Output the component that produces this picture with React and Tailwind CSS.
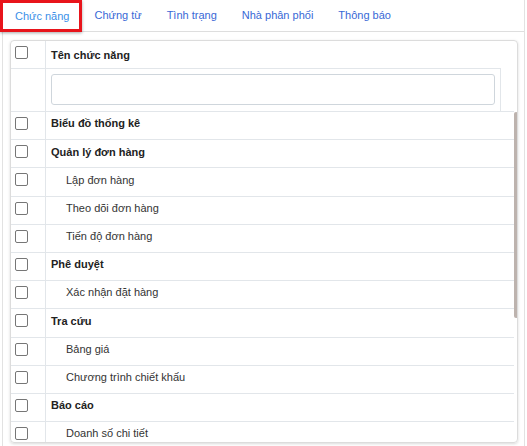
import React from 'react';

const tabs = ['Chứng từ', 'Tình trạng', 'Nhà phân phối', 'Thông báo'];

const rows = [
  { label: 'Biểu đồ thống kê', group: true },
  { label: 'Quản lý đơn hàng', group: true },
  { label: 'Lập đơn hàng' },
  { label: 'Theo dõi đơn hàng' },
  { label: 'Tiến độ đơn hàng' },
  { label: 'Phê duyệt', group: true },
  { label: 'Xác nhận đặt hàng' },
  { label: 'Tra cứu', group: true },
  { label: 'Bảng giá' },
  { label: 'Chương trình chiết khấu' },
  { label: 'Báo cáo', group: true },
  { label: 'Doanh số chi tiết' },
];

const Checkbox = () => (
  <div className="w-[13px] h-[13px] rounded-[2px] border border-[#767676] bg-white" />
);

const App = () => {
  return (
    <div
      className="w-[527px] h-[446px] bg-white overflow-hidden text-[11px]"
      style={{ fontFamily: '"Liberation Sans", Arial, sans-serif' }}
    >
      <div className="mx-[2px] h-full border-x border-[#e2e2e2] flex flex-col">
        {/* Tabs */}
        <div className="h-[32px] shrink-0 flex items-stretch border-b border-[#dedede]">
          <div className="-ml-[3px] relative z-10 w-[82px] h-[32px] border-[3px] border-[#e8141b] pl-[12px] flex items-center text-[#3b8fe8] shadow-[0_1px_3px_rgba(0,0,0,0.35)]">
            Chức năng
          </div>
          {tabs.map((t) => (
            <div key={t} className="px-[12.5px] flex items-center text-[#3868d6]">
              {t}
            </div>
          ))}
        </div>

        {/* Card */}
        <div className="flex-1 min-h-0 pl-[7px] pr-[6px] pt-[8px] pb-[3px]">
          <div className="h-full rounded-[4px] border border-[#dcdcdc] shadow-[0_1px_3px_rgba(0,0,0,0.15)] flex flex-col overflow-hidden">
            {/* Header */}
            <div className="w-[490px] shrink-0">
              <div className="h-[28px] flex border-b border-[#e2e6ea]">
                <div className="w-[35px] border-r border-[#e2e6ea] pl-[4px] pt-[5px]">
                  <Checkbox />
                </div>
                <div className="flex-1 pl-[5px] pt-[2px] flex items-center font-bold text-[#222]">
                  Tên chức năng
                </div>
              </div>
              <div className="h-[42px] flex border-r border-[#e2e6ea]">
                <div className="w-[35px] border-r border-[#e2e6ea]" />
                <div className="flex-1 pl-[5px] pt-[5px]">
                  <div className="w-[444px] h-[31px] rounded-[3px] border border-[#cfd6dc] bg-white" />
                </div>
              </div>
            </div>

            {/* Body */}
            <div className="flex-1 min-h-0 flex">
              <div className="w-[503px] overflow-hidden">
                {rows.map((r) => (
                  <div key={r.label} className="h-[28.2px] flex border-t border-[#e2e6ea]">
                    <div className="w-[35px] shrink-0 border-r border-[#e2e6ea] pl-[4px] pb-[4px] flex items-center">
                      <Checkbox />
                    </div>
                    <div
                      className={
                        r.group
                          ? 'flex-1 pl-[5px] pb-[4px] flex items-center font-bold text-[#222]'
                          : 'flex-1 pl-[20px] pb-[4px] flex items-center text-[#333]'
                      }
                    >
                      {r.label}
                    </div>
                  </div>
                ))}
              </div>
              <div className="flex-1 relative">
                <div className="absolute left-0 top-[1px] w-[4px] h-[206px] rounded-full bg-[#bdb3ae]" />
              </div>
            </div>
          </div>
        </div>
      </div>
    </div>
  );
};

export default App;
